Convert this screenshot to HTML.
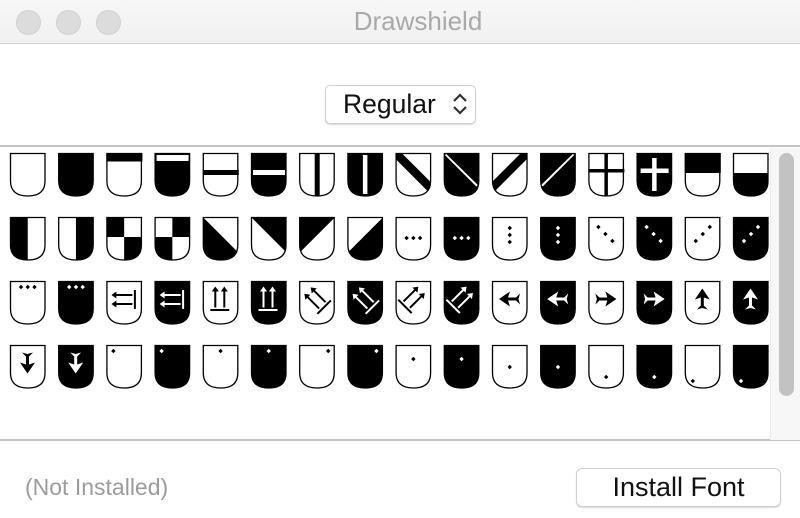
<!DOCTYPE html>
<html><head><meta charset="utf-8">
<style>
html,body{margin:0;padding:0;width:800px;height:518px;overflow:hidden;background:#fff;font-family:"Liberation Sans",sans-serif;}
.tb{position:absolute;left:0;top:0;width:800px;height:43px;background:linear-gradient(#f7f7f7,#f1f1f1);border-bottom:1px solid #cfcfcf;}
.dot{position:absolute;top:10px;width:23px;height:23px;border-radius:50%;background:#dcdcdc;border:0.5px solid #d0d0d0;}
.title{position:absolute;left:0;width:836px;top:6px;text-align:center;font-size:26px;color:#a9a9a9;}
.pop{position:absolute;left:325px;top:85px;width:149px;height:37px;border:1px solid #cfcfcf;border-radius:5px;box-shadow:0 1px 1px rgba(0,0,0,.15);background:#fff;}
.pop span{position:absolute;left:17px;top:3px;font-size:26.5px;color:#111;}
.line{position:absolute;left:0;width:800px;height:2px;background:#c4c4c4;}
.sb{position:absolute;left:770px;top:148px;width:30px;height:292px;background:#f7f7f7;border-left:1px solid #ececec;}
.th{position:absolute;left:8px;top:5px;width:15px;height:243px;border-radius:8px;background:#c2c2c2;}
.ni{position:absolute;left:25px;top:474px;font-size:23px;color:#9b9b9b;}
.btn{position:absolute;left:576px;top:468px;width:203px;height:37px;border:1px solid #cfcfcf;border-radius:6px;box-shadow:0 1px 1px rgba(0,0,0,.15);background:#fff;text-align:center;font-size:27px;line-height:37px;color:#111;}
svg.g{position:absolute;left:0;top:0;}
</style></head><body>
<div class="tb">
<div class="dot" style="left:16px"></div><div class="dot" style="left:56px"></div><div class="dot" style="left:96px"></div>
<div class="title">Drawshield</div>
</div>
<div class="pop"><span>Regular</span>
<svg style="position:absolute;left:126px;top:6px" width="16" height="24" viewBox="0 0 16 24"><path d="M2 9 L8 3 L14 9 M2 15 L8 21 L14 15" fill="none" stroke="#333" stroke-width="2.2"/></svg></div>
<div class="line" style="top:145px"></div>
<div class="line" style="top:439px"></div>
<div class="sb"><div class="th"></div></div>
<div class="ni">(Not Installed)</div>
<div class="btn">Install Font</div>

<svg class="g" width="770" height="440" viewBox="0 0 770 440">
<defs>
<path id="sp" d="M0.5,0.5 H35 V28 C35,38 29,43 17.75,43 C6.5,43 0.5,38 0.5,28 Z"/>
<clipPath id="c"><use href="#sp"/></clipPath>
<g id="W"><use href="#sp" fill="#fff"/></g>
<g id="B"><use href="#sp" fill="#000"/></g>
<g id="O"><use href="#sp" fill="none" stroke="#000" stroke-width="1.3"/></g>
<path id="d" d="M0,-2.2 L2.2,0 0,2.2 -2.2,0Z"/>
<g id="arr2">
<path d="M5,14 L10,10.5 V17.5Z M9,13 H26 V15 H9Z M5,23 L10,19.5 V26.5Z M9,22 H26 V24 H9Z M27.5,9 H29.5 V28 H27.5Z"/>
</g>
<path id="big" d="M7,18 L18,10.5 L16,16.5 L24,16.5 L28,12.5 L26.5,18 L28,23.5 L24,19.5 L16,19.5 L18,25.5Z"/>
</defs>

<!-- ROW 1 y=153 -->
<g transform="translate(10,153)"><use href="#W"/><use href="#O"/></g>
<g transform="translate(58.2,153)"><use href="#B"/><use href="#O"/></g>
<g transform="translate(106.4,153)"><use href="#W"/><rect x="0" y="0" width="36" height="8.5" fill="#000"/><use href="#O"/></g>
<g transform="translate(154.6,153)"><use href="#B"/><rect x="2" y="2" width="32" height="6" fill="#fff"/><use href="#O"/></g>
<g transform="translate(202.8,153)"><use href="#W"/><rect x="0" y="17" width="36" height="5" fill="#000"/><use href="#O"/></g>
<g transform="translate(251,153)"><use href="#B"/><rect x="2" y="17" width="32" height="5" fill="#fff"/><use href="#O"/></g>
<g transform="translate(299.2,153)"><use href="#W"/><rect x="15.5" y="0" width="5" height="43" fill="#000"/><use href="#O"/></g>
<g transform="translate(347.4,153)"><use href="#B"/><rect x="15.5" y="2" width="4.5" height="39" fill="#fff"/><use href="#O"/></g>
<g transform="translate(395.6,153)"><use href="#W"/><g clip-path="url(#c)"><path d="M0,0 L6,0 L38,32 L32,38 L0,6Z" fill="#000"/></g><use href="#O"/></g>
<g transform="translate(443.8,153)"><use href="#B"/><g clip-path="url(#c)"><path d="M1,2 L2.5,1 L34,32 L32.5,33.5Z" fill="#fff"/></g><use href="#O"/></g>
<g transform="translate(492,153)"><use href="#W"/><g clip-path="url(#c)"><path d="M35,0 L29,0 L-3,32 L3,38 L35,6Z" fill="#000"/></g><use href="#O"/></g>
<g transform="translate(540.2,153)"><use href="#B"/><g clip-path="url(#c)"><path d="M34,2 L32.5,1 L1,32 L2.5,33.5Z" fill="#fff"/></g><use href="#O"/></g>
<g transform="translate(588.4,153)"><use href="#W"/><rect x="16" y="0" width="3.5" height="43" fill="#000"/><rect x="0" y="16" width="36" height="3.5" fill="#000"/><use href="#O"/></g>
<g transform="translate(636.6,153)"><use href="#B"/><rect x="15.5" y="5" width="4.5" height="33" fill="#fff"/><rect x="4" y="15.5" width="28" height="4.5" fill="#fff"/><use href="#O"/></g>
<g transform="translate(684.8,153)"><use href="#W"/><rect x="0" y="0" width="36" height="20" fill="#000"/><use href="#O"/></g>
<g transform="translate(733,153)"><use href="#W"/><g clip-path="url(#c)"><rect x="0" y="20" width="36" height="24" fill="#000"/></g><use href="#O"/></g>

<!-- ROW 2 y=217 -->
<g transform="translate(10,217)"><use href="#W"/><g clip-path="url(#c)"><rect x="0" y="0" width="17.75" height="44" fill="#000"/></g><use href="#O"/></g>
<g transform="translate(58.2,217)"><use href="#W"/><g clip-path="url(#c)"><rect x="17.75" y="0" width="18" height="44" fill="#000"/></g><use href="#O"/></g>
<g transform="translate(106.4,217)"><use href="#W"/><g clip-path="url(#c)"><rect x="0" y="0" width="17.75" height="20" fill="#000"/><rect x="17.75" y="20" width="18" height="24" fill="#000"/></g><use href="#O"/></g>
<g transform="translate(154.6,217)"><use href="#W"/><g clip-path="url(#c)"><rect x="17.75" y="0" width="18" height="20" fill="#000"/><rect x="0" y="20" width="17.75" height="24" fill="#000"/></g><use href="#O"/></g>
<g transform="translate(202.8,217)"><use href="#W"/><g clip-path="url(#c)"><path d="M0,0 L36,36 L36,44 L0,44Z" fill="#000"/></g><use href="#O"/></g>
<g transform="translate(251,217)"><use href="#W"/><g clip-path="url(#c)"><path d="M0,0 L36,36 L36,0Z" fill="#000"/></g><use href="#O"/></g>
<g transform="translate(299.2,217)"><use href="#W"/><g clip-path="url(#c)"><path d="M36,0 L0,36 L0,0Z" fill="#000"/></g><use href="#O"/></g>
<g transform="translate(347.4,217)"><use href="#W"/><g clip-path="url(#c)"><path d="M36,0 L0,36 L0,44 L36,44Z" fill="#000"/></g><use href="#O"/></g>
<g transform="translate(395.6,217)"><use href="#W"/><g fill="#000"><use href="#d" x="11" y="21"/><use href="#d" x="17.75" y="21"/><use href="#d" x="24.5" y="21"/></g><use href="#O"/></g>
<g transform="translate(443.8,217)"><use href="#B"/><g fill="#fff"><use href="#d" x="11" y="21"/><use href="#d" x="17.75" y="21"/><use href="#d" x="24.5" y="21"/></g><use href="#O"/></g>
<g transform="translate(492,217)"><use href="#W"/><g fill="#000"><use href="#d" x="17.75" y="11"/><use href="#d" x="17.75" y="18"/><use href="#d" x="17.75" y="25"/></g><use href="#O"/></g>
<g transform="translate(540.2,217)"><use href="#B"/><g fill="#fff"><use href="#d" x="17.75" y="11"/><use href="#d" x="17.75" y="18"/><use href="#d" x="17.75" y="25"/></g><use href="#O"/></g>
<g transform="translate(588.4,217)"><use href="#W"/><g fill="#000"><use href="#d" x="10" y="10"/><use href="#d" x="17" y="17"/><use href="#d" x="24" y="24"/></g><use href="#O"/></g>
<g transform="translate(636.6,217)"><use href="#B"/><g fill="#fff"><use href="#d" x="10" y="10"/><use href="#d" x="17" y="17"/><use href="#d" x="24" y="24"/></g><use href="#O"/></g>
<g transform="translate(684.8,217)"><use href="#W"/><g fill="#000"><use href="#d" x="25" y="10"/><use href="#d" x="18" y="17"/><use href="#d" x="11" y="24"/></g><use href="#O"/></g>
<g transform="translate(733,217)"><use href="#B"/><g fill="#fff"><use href="#d" x="25" y="10"/><use href="#d" x="18" y="17"/><use href="#d" x="11" y="24"/></g><use href="#O"/></g>

<!-- ROW 3 y=281 -->
<g transform="translate(10,281)"><use href="#W"/><g fill="#000"><use href="#d" x="11" y="6"/><use href="#d" x="17.75" y="6"/><use href="#d" x="24.5" y="6"/></g><use href="#O"/></g>
<g transform="translate(58.2,281)"><use href="#B"/><g fill="#fff"><use href="#d" x="11" y="6"/><use href="#d" x="17.75" y="6"/><use href="#d" x="24.5" y="6"/></g><use href="#O"/></g>
<g transform="translate(106.4,281)"><use href="#W"/><use href="#arr2" fill="#000"/><use href="#O"/></g>
<g transform="translate(154.6,281)"><use href="#B"/><use href="#arr2" fill="#fff"/><use href="#O"/></g>
<g transform="translate(202.8,281)"><use href="#W"/><use href="#arr2" fill="#000" transform="rotate(90 17.5 18)"/><use href="#O"/></g>
<g transform="translate(251,281)"><use href="#B"/><use href="#arr2" fill="#fff" transform="rotate(90 17.5 18)"/><use href="#O"/></g>
<g transform="translate(299.2,281)"><use href="#W"/><use href="#arr2" fill="#000" transform="rotate(45 17.5 18)"/><use href="#O"/></g>
<g transform="translate(347.4,281)"><use href="#B"/><use href="#arr2" fill="#fff" transform="rotate(45 17.5 18)"/><use href="#O"/></g>
<g transform="translate(395.6,281)"><use href="#W"/><use href="#arr2" fill="#000" transform="rotate(135 17.5 18)"/><use href="#O"/></g>
<g transform="translate(443.8,281)"><use href="#B"/><use href="#arr2" fill="#fff" transform="rotate(135 17.5 18)"/><use href="#O"/></g>
<g transform="translate(492,281)"><use href="#W"/><use href="#big" fill="#000"/><use href="#O"/></g>
<g transform="translate(540.2,281)"><use href="#B"/><use href="#big" fill="#fff"/><use href="#O"/></g>
<g transform="translate(588.4,281)"><use href="#W"/><use href="#big" fill="#000" transform="rotate(180 17.5 18)"/><use href="#O"/></g>
<g transform="translate(636.6,281)"><use href="#B"/><use href="#big" fill="#fff" transform="rotate(180 17.5 18)"/><use href="#O"/></g>
<g transform="translate(684.8,281)"><use href="#W"/><use href="#big" fill="#000" transform="rotate(90 17.5 18)"/><use href="#O"/></g>
<g transform="translate(733,281)"><use href="#B"/><use href="#big" fill="#fff" transform="rotate(90 17.5 18)"/><use href="#O"/></g>

<!-- ROW 4 y=345 -->
<g transform="translate(10,345)"><use href="#W"/><use href="#big" fill="#000" transform="rotate(-90 17.5 18)"/><use href="#O"/></g>
<g transform="translate(58.2,345)"><use href="#B"/><use href="#big" fill="#fff" transform="rotate(-90 17.5 18)"/><use href="#O"/></g>
<g transform="translate(106.4,345)"><use href="#W"/><use href="#d" x="7" y="6" fill="#000"/><use href="#O"/></g>
<g transform="translate(154.6,345)"><use href="#B"/><use href="#d" x="7" y="6" fill="#fff"/><use href="#O"/></g>
<g transform="translate(202.8,345)"><use href="#W"/><use href="#d" x="17.75" y="6" fill="#000"/><use href="#O"/></g>
<g transform="translate(251,345)"><use href="#B"/><use href="#d" x="17.75" y="6" fill="#fff"/><use href="#O"/></g>
<g transform="translate(299.2,345)"><use href="#W"/><use href="#d" x="29" y="6" fill="#000"/><use href="#O"/></g>
<g transform="translate(347.4,345)"><use href="#B"/><use href="#d" x="29" y="6" fill="#fff"/><use href="#O"/></g>
<g transform="translate(395.6,345)"><use href="#W"/><use href="#d" x="17.75" y="14" fill="#000"/><use href="#O"/></g>
<g transform="translate(443.8,345)"><use href="#B"/><use href="#d" x="17.75" y="14" fill="#fff"/><use href="#O"/></g>
<g transform="translate(492,345)"><use href="#W"/><use href="#d" x="17.75" y="22" fill="#000"/><use href="#O"/></g>
<g transform="translate(540.2,345)"><use href="#B"/><use href="#d" x="17.75" y="22" fill="#fff"/><use href="#O"/></g>
<g transform="translate(588.4,345)"><use href="#W"/><use href="#d" x="17.75" y="32" fill="#000"/><use href="#O"/></g>
<g transform="translate(636.6,345)"><use href="#B"/><use href="#d" x="17.75" y="32" fill="#fff"/><use href="#O"/></g>
<g transform="translate(684.8,345)"><use href="#W"/><use href="#d" x="8" y="36" fill="#000"/><use href="#O"/></g>
<g transform="translate(733,345)"><use href="#B"/><use href="#d" x="8" y="36" fill="#fff"/><use href="#O"/></g>
</svg>
</body></html>
